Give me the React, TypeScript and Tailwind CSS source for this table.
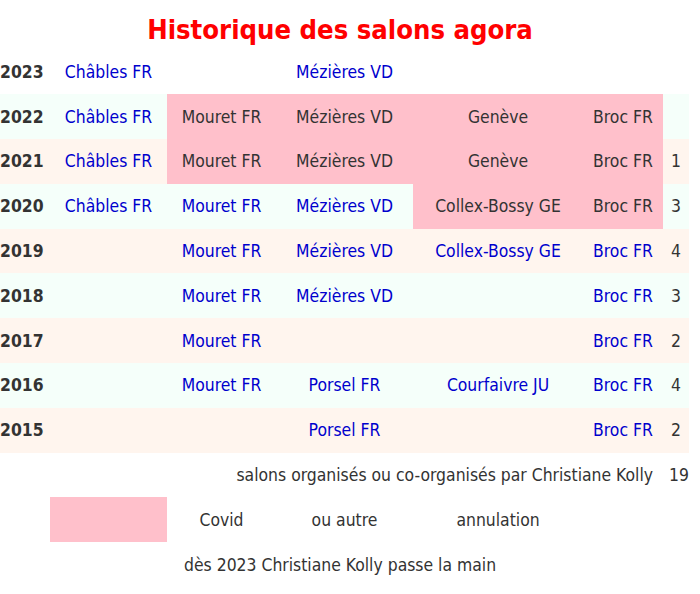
const years = [
  { y: "2023", bg: "", cells: ["Châbles FR", "", "Mézières VD", "", "", ""], pink: [] as number[] },
  { y: "2022", bg: "bg-[#f5fffa]", cells: ["Châbles FR", "Mouret FR", "Mézières VD", "Genève", "Broc FR", ""], pink: [1, 2, 3, 4] },
  { y: "2021", bg: "bg-[#fff5ee]", cells: ["Châbles FR", "Mouret FR", "Mézières VD", "Genève", "Broc FR", "1"], pink: [1, 2, 3, 4] },
  { y: "2020", bg: "bg-[#f5fffa]", cells: ["Châbles FR", "Mouret FR", "Mézières VD", "Collex-Bossy GE", "Broc FR", "3"], pink: [3, 4] },
  { y: "2019", bg: "bg-[#fff5ee]", cells: ["", "Mouret FR", "Mézières VD", "Collex-Bossy GE", "Broc FR", "4"], pink: [] },
  { y: "2018", bg: "bg-[#f5fffa]", cells: ["", "Mouret FR", "Mézières VD", "", "Broc FR", "3"], pink: [] },
  { y: "2017", bg: "bg-[#fff5ee]", cells: ["", "Mouret FR", "", "", "Broc FR", "2"], pink: [] },
  { y: "2016", bg: "bg-[#f5fffa]", cells: ["", "Mouret FR", "Porsel FR", "Courfaivre JU", "Broc FR", "4"], pink: [] },
  { y: "2015", bg: "bg-[#fff5ee]", cells: ["", "", "Porsel FR", "", "Broc FR", "2"], pink: [] },
];

const grid = "grid grid-cols-[50px_117px_109px_137px_170px_80px_26px] h-[44.8px] w-[689px]";

export default function App() {
  return (
    <div className="w-[700px] h-[594px] bg-white overflow-hidden text-[17.4px] text-[#333] [font-family:'DejaVu_Sans_Condensed','DejaVu_Sans',sans-serif] font-stretch-condensed">
      <h1 className="h-[49.5px] flex items-center justify-center pt-[12px] pr-[20px] text-[27.2px] font-bold text-[#ff0000]">
        Historique des salons agora
      </h1>

      {years.map((r) => (
        <div key={r.y} className={`${grid} ${r.bg}`}>
          <div className="flex items-center font-bold">{r.y}</div>
          {r.cells.map((c, i) => {
            const pink = r.pink.includes(i);
            const last = i === 5;
            return (
              <div
                key={i}
                className={`flex items-center justify-center ${pink ? "bg-[#ffc0cb] text-[#333]" : last ? "text-[#333]" : "text-[#0000cd]"}`}
              >
                {c}
              </div>
            );
          })}
        </div>
      ))}

      {/* total */}
      <div className={grid}>
        <div className="col-span-6 flex items-center justify-end pr-[10px]">
          salons organisés ou co-organisés par Christiane Kolly
        </div>
        <div className="flex items-center pl-[6px]">19</div>
      </div>

      {/* legende */}
      <div className={grid}>
        <div />
        <div className="bg-[#ffc0cb]" />
        <div className="flex items-center justify-center">Covid</div>
        <div className="flex items-center justify-center">ou autre</div>
        <div className="flex items-center justify-center">annulation</div>
      </div>

      <div className={grid}>
        <div />
        <div />
        <div className="col-span-4 flex items-center pl-[17px]">dès 2023 Christiane Kolly passe la main</div>
      </div>
    </div>
  );
}
